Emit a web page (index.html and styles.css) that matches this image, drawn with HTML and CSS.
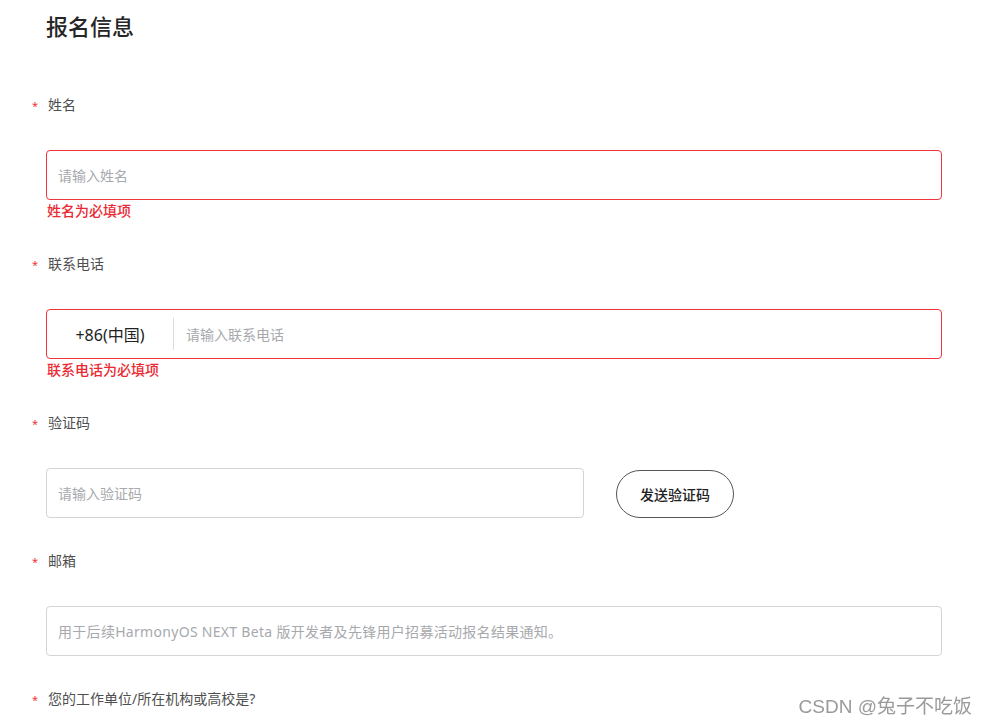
FILE: index.html
```html
<!DOCTYPE html>
<html lang="zh-CN">
<head>
<meta charset="utf-8">
<title>报名信息</title>
<link rel="stylesheet" href="styles.css">
</head>
<body>
<div class="page">
  <h1 class="title">报名信息</h1>
  <form class="form">
    <div class="item">
      <label class="label"><span class="req">*</span>姓名</label>
      <div class="box box-error">
        <input class="field" type="text" placeholder="请输入姓名">
      </div>
      <div class="error">姓名为必填项</div>
    </div>

    <div class="item">
      <label class="label"><span class="req">*</span>联系电话</label>
      <div class="box box-error phone">
        <span class="prefix">+86(中国)</span>
        <span class="divider"></span>
        <input class="field" type="text" placeholder="请输入联系电话">
      </div>
      <div class="error">联系电话为必填项</div>
    </div>

    <div class="item">
      <label class="label"><span class="req">*</span>验证码</label>
      <div class="code-row">
        <div class="box box-code">
          <input class="field" type="text" placeholder="请输入验证码">
        </div>
        <button type="button" class="send">发送验证码</button>
      </div>
    </div>

    <div class="item">
      <label class="label"><span class="req">*</span>邮箱</label>
      <div class="box">
        <input class="field email" type="text" placeholder="用于后续HarmonyOS NEXT Beta 版开发者及先锋用户招募活动报名结果通知。">
      </div>
    </div>

    <div class="item last">
      <label class="label"><span class="req">*</span>您的工作单位/所在机构或高校是?</label>
    </div>
  </form>
</div>
<div class="watermark">CSDN @兔子不吃饭</div>
</body>
</html>
```

FILE: styles.css
```css
* {
  box-sizing: border-box;
}

html, body {
  margin: 0;
  padding: 0;
  background: #ffffff;
}

body {
  font-family: "Noto Sans", "Noto Sans CJK SC", sans-serif;
  color: #333333;
  height: 726px;
  overflow: hidden;
}

.page {
  padding: 10px 0 0 46px;
  width: 942px;
}

.title {
  margin: 0 0 55px 0;
  font-family: "Noto Sans CJK SC", sans-serif;
  font-size: 22px;
  line-height: 30px;
  font-weight: 500;
  color: #262626;
}

.form {
  display: flex;
  flex-direction: column;
}

.item {
  display: flex;
  flex-direction: column;
  margin-bottom: 33px;
}

.item.last {
  margin-bottom: 0;
}

.label {
  display: flex;
  align-items: center;
  font-family: "Noto Sans", "Noto Sans CJK SC", sans-serif;
  font-size: 14px;
  line-height: 20px;
  height: 20px;
  color: #4f4f4f;
  margin-bottom: 35px;
}

.req {
  width: 16px;
  margin-left: -14px;
  color: #f0353d;
  font-size: 11px;
  line-height: 20px;
  position: relative;
  top: 1px;
}

.box {
  display: flex;
  align-items: center;
  height: 50px;
  width: 896px;
  border: 1px solid #d4d4d4;
  border-radius: 4px;
  background: #fff;
}

.box-error {
  border-color: #f0353d;
}

.field {
  flex: 1;
  min-width: 0;
  border: none;
  outline: none;
  background: transparent;
  padding: 0 11px;
  height: 100%;
  font-family: "Noto Sans", "Noto Sans CJK SC", sans-serif;
  font-size: 14px;
  color: #333;
}

.field::placeholder {
  color: #a7a9ad;
}

.email {
  letter-spacing: 0.3px;
}

.prefix {
  width: 126px;
  text-align: center;
  font-family: "Noto Sans", "Noto Sans CJK SC", sans-serif;
  font-size: 16px;
  color: #222;
}

.divider {
  width: 1px;
  height: 32px;
  background: #dcdcdc;
}

.phone .field {
  padding-left: 12px;
}

.error {
  padding-left: 1px;
  font-size: 14px;
  line-height: 21px;
  height: 21px;
  font-weight: 500;
  color: #ea2a33;
}

.code-row {
  display: flex;
  align-items: center;
  gap: 32px;
}

.box-code {
  width: 538px;
}

.send {
  width: 118px;
  height: 48px;
  margin-top: 2px;
  border: 1px solid #555;
  border-radius: 24px;
  background: #fff;
  font-family: "Noto Sans CJK SC", sans-serif;
  font-size: 14px;
  font-weight: 500;
  color: #222;
  padding: 0;
}

.watermark {
  position: fixed;
  right: 15px;
  bottom: 7px;
  font-family: "Liberation Sans", "Noto Sans CJK SC", sans-serif;
  font-size: 19px;
  line-height: 24px;
  color: #9a9a9a;
  text-shadow: 0 0 1px #ffffff;
}
```
